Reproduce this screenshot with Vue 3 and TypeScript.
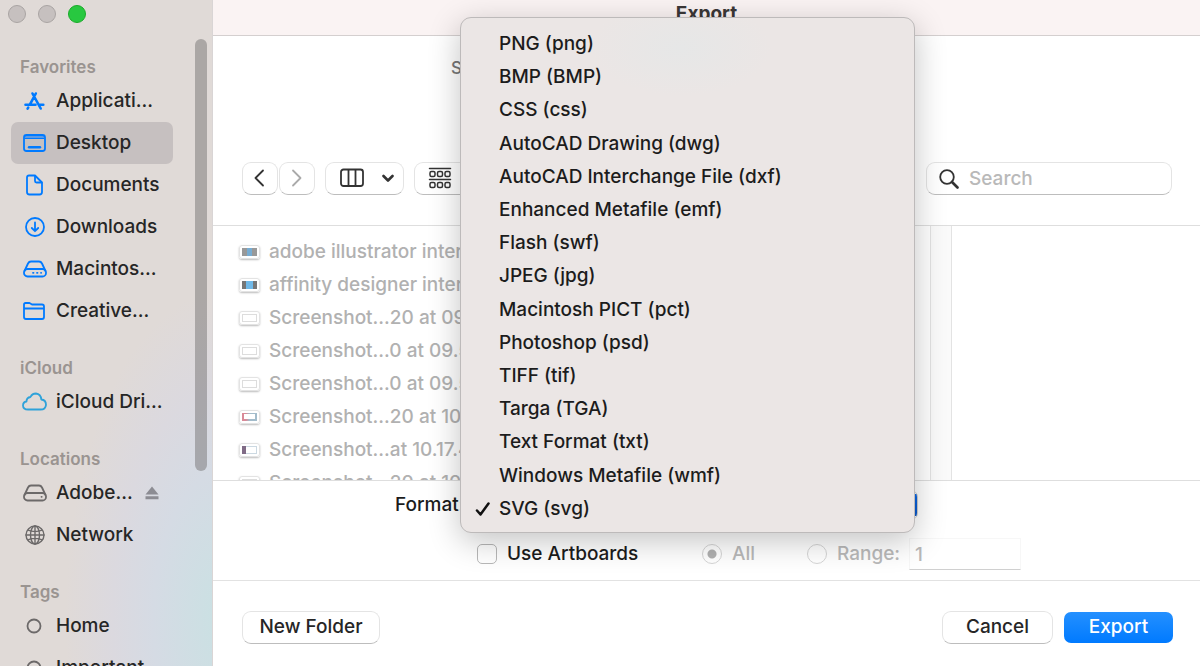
<script setup lang="ts">
import { ref } from 'vue'

interface Place { icon: string; label: string; selected?: boolean; eject?: boolean }
interface Section { title: string; places: Place[] }

const sections: Section[] = [
  {
    title: 'Favorites',
    places: [
      { icon: 'apps', label: 'Applicati...' },
      { icon: 'desktop', label: 'Desktop', selected: true },
      { icon: 'doc', label: 'Documents' },
      { icon: 'down', label: 'Downloads' },
      { icon: 'disk', label: 'Macintos...' },
      { icon: 'folder', label: 'Creative...' },
    ],
  },
  { title: 'iCloud', places: [{ icon: 'cloud', label: 'iCloud Dri...' }] },
  {
    title: 'Locations',
    places: [
      { icon: 'drive', label: 'Adobe...', eject: true },
      { icon: 'globe', label: 'Network' },
    ],
  },
  {
    title: 'Tags',
    places: [
      { icon: 'tag', label: 'Home' },
      { icon: 'tag', label: 'Important' },
    ],
  },
]

const files = [
  { thumb: 'dark', name: 'adobe illustrator interface' },
  { thumb: 'darker', name: 'affinity designer interface' },
  { thumb: 'plain', name: 'Screenshot...20 at 09.51' },
  { thumb: 'plain', name: 'Screenshot...0 at 09.52' },
  { thumb: 'plain', name: 'Screenshot...0 at 09.53' },
  { thumb: 'color', name: 'Screenshot...20 at 10.16' },
  { thumb: 'side', name: 'Screenshot...at 10.17.41' },
  { thumb: 'plain', name: 'Screenshot...20 at 10.18' },
]

const formats = [
  'PNG (png)', 'BMP (BMP)', 'CSS (css)', 'AutoCAD Drawing (dwg)',
  'AutoCAD Interchange File (dxf)', 'Enhanced Metafile (emf)', 'Flash (swf)',
  'JPEG (jpg)', 'Macintosh PICT (pct)', 'Photoshop (psd)', 'TIFF (tif)',
  'Targa (TGA)', 'Text Format (txt)', 'Windows Metafile (wmf)', 'SVG (svg)',
]
const format = ref('SVG (svg)')
const fileName = ref('')
const query = ref('')
const useArtboards = ref(false)
const scope = ref('all')
const range = ref('1')
</script>

<template>
  <div class="window">
    <aside class="sidebar">
      <div class="lights">
        <button class="light" aria-label="Close"></button>
        <button class="light" aria-label="Minimize"></button>
        <button class="light green" aria-label="Zoom"></button>
      </div>
      <nav>
        <section v-for="s in sections" :key="s.title" class="group">
          <h2>{{ s.title }}</h2>
          <a v-for="p in s.places" :key="p.label" href="#" class="place" :class="{ selected: p.selected }">
            <svg class="icon" :class="p.icon" viewBox="0 0 26 26" width="26" height="26" fill="none" stroke="currentColor" stroke-width="1.8" stroke-linecap="round" stroke-linejoin="round" aria-hidden="true">
              <g v-if="p.icon === 'apps'" stroke-width="2.6">
                <path d="M10.5 5.5 18.7 20.5M13.8 5.5 8 16.3M3.5 16.8H13.5M18 16.8H21.3M6.2 19.6 5.6 20.6" />
              </g>
              <g v-else-if="p.icon === 'desktop'">
                <path d="M3 7V6.2Q3 5 4.5 5H20.500Q22 5 22 6.200V8.500H3z" fill="#5b9ae6" stroke="none" />
                <rect x="2" y="5" width="21" height="16" rx="2.500" />
                <path d="M3 8.500H22" stroke-width="1" />
                <path d="M7 17.300H18" stroke-width="2.400" />
              </g>
              <g v-else-if="p.icon === 'doc'">
                <path d="M7 3.500H13L20 10.500V20Q20 22.500 17.500 22.500H7.500Q5 22.500 5 20V5.500Q5 3.500 7 3.500Z" />
                <path d="M13 4V9Q13 10.500 14.500 10.500H19.500" />
              </g>
              <g v-else-if="p.icon === 'down'">
                <circle cx="13" cy="13" r="9" />
                <path d="M13 8.500V17M9.800 14 13 17.200 16.200 14" />
              </g>
              <g v-else-if="p.icon === 'disk' || p.icon === 'drive'">
                <path d="M2.500 15 6 7.500Q7 5.500 9 5.500H17Q19 5.500 20 7.500L23.500 15" />
                <rect x="2" y="13" width="22" height="7.500" rx="3.500" />
                <path v-if="p.icon === 'disk'" d="M11 16.800h.5M15 16.800h.5M19 16.800h.2" />
                <path v-else d="M19.500 16.800h.2" />
              </g>
              <g v-else-if="p.icon === 'folder'">
                <path d="M2 10.500V6.500Q2 5 3.500 5H7.500L10 6.500H20Q22 6.500 22 8.500V19Q22 21 20 21H4Q2 21 2 19V10.500H22" />
              </g>
              <g v-else-if="p.icon === 'cloud'">
                <path d="M6 20.500Q1 20.500 1 16.500Q1 13 4.500 12.500Q4.500 8.500 8.500 8Q10 4.500 14 4.500Q18.800 5 19.300 10.500Q24 11 24 15.800Q23.500 20.500 18.500 20.500Z" />
              </g>
              <g v-else-if="p.icon === 'globe'" stroke-width="1.400">
                <circle cx="13" cy="13" r="9" />
                <ellipse cx="13" cy="13" rx="4.500" ry="9" />
                <path d="M13 4V22M4 13H22M6 8.200Q13 11 20 8.200M6 17.800Q13 15 20 17.800" />
              </g>
              <circle v-else cx="12" cy="13" r="6.500" stroke-width="1.800" />
            </svg>
            <span>{{ p.label }}</span>
            <svg v-if="p.eject" class="eject" viewBox="0 0 14 14" width="14" height="14" fill="currentColor" aria-hidden="true">
              <path d="M7 .5 13.500 8.500H.5ZM.5 10.200H13.500V13.200H.5Z" />
            </svg>
          </a>
        </section>
      </nav>
      <div class="scrollbar"></div>
    </aside>

    <main class="panel">
      <header class="titlebar"><h1>Export</h1></header>

      <div class="save-row">
        <label for="file-name">Save As:</label>
        <input id="file-name" v-model="fileName" type="text" />
      </div>

      <div class="toolbar">
        <div class="pair">
          <button class="tool" aria-label="Back">
            <svg viewBox="0 0 16 20" width="16" height="20"><path d="M11 2.500 3.500 10 11 17.500" /></svg>
          </button>
          <button class="tool forward" aria-label="Forward">
            <svg viewBox="0 0 16 20" width="16" height="20"><path d="M4 2.500 11.500 10 4 17.500" /></svg>
          </button>
        </div>
        <button class="tool view" aria-label="Column view">
          <svg viewBox="0 0 24 20" width="24" height="20"><rect x="1" y="1.500" width="22" height="16.500" rx="2.500" /><path d="M8.500 2V18M15.500 2V18" /></svg>
          <svg viewBox="0 0 12 10" width="12" height="10"><path class="bold" d="M1.500 3 6 7.500 10.500 3" /></svg>
        </button>
        <button class="tool arrange" aria-label="Group items">
          <svg viewBox="0 0 24 22" width="24" height="22">
            <path d="M1.500 1.500H22.500M1.500 12.500H22.500" />
            <rect x="2" y="4.500" width="5" height="5" rx="1.500" /><rect x="9.500" y="4.500" width="5" height="5" rx="1.500" /><rect x="17" y="4.500" width="5" height="5" rx="1.500" />
            <rect x="2" y="15.500" width="5" height="5" rx="1.500" /><rect x="9.500" y="15.500" width="5" height="5" rx="1.500" /><rect x="17" y="15.500" width="5" height="5" rx="1.500" />
          </svg>
        </button>
        <label class="search">
          <svg viewBox="0 0 20 20" width="20" height="20"><circle cx="8" cy="8" r="6.800" /><path class="bold" d="M13 13 18.500 18.500" /></svg>
          <input v-model="query" type="text" placeholder="Search" aria-label="Search" />
        </label>
      </div>

      <div class="browser">
        <ul class="files">
          <li v-for="f in files" :key="f.name">
            <span class="thumb" :class="f.thumb"></span>{{ f.name }}
          </li>
        </ul>
        <div class="divider"></div>
        <div class="column"></div>
      </div>

      <div class="options">
        <div class="format-row">
          <label for="format">Format:</label>
          <div class="format-field">
            <select id="format" v-model="format">
              <option v-for="f in formats" :key="f">{{ f }}</option>
            </select>
            <div class="menu" role="menu">
              <button v-for="f in formats" :key="f" role="menuitemradio" :aria-checked="f === format" @click="format = f">
                <span class="tick">
                  <svg v-if="f === format" viewBox="0 0 16 16" width="16" height="16" fill="none" stroke="#111" stroke-width="2.500" stroke-linecap="round" stroke-linejoin="round" aria-hidden="true"><path d="M2 9.500 5.500 13.500 13.500 2.500" /></svg>
                </span>{{ f }}
              </button>
            </div>
          </div>
        </div>
        <div class="artboards">
          <label><input v-model="useArtboards" type="checkbox" />Use Artboards</label>
          <label class="off"><input v-model="scope" type="radio" value="all" disabled />All</label>
          <label class="off"><input v-model="scope" type="radio" value="range" disabled />Range:</label>
          <input v-model="range" class="range" type="text" aria-label="Artboard range" disabled />
        </div>
      </div>

      <footer class="footer">
        <button class="push folder-btn">New Folder</button>
        <button class="push cancel">Cancel</button>
        <button class="push primary">Export</button>
      </footer>
    </main>
  </div>
</template>

<style>
body { margin: 0; }
</style>

<style scoped>
* { box-sizing: border-box; }
.window {
  display: flex;
  height: 100vh;
  overflow: hidden;
  background: #fff;
  color: #262626;
  font: 450 19px/24px Inter, "Liberation Sans", sans-serif;
}
button, input, select { font: inherit; color: inherit; margin: 0; }
button { padding: 0; border: 0; background: none; }

.sidebar {
  position: relative;
  flex: none;
  width: 213px;
  overflow: hidden;
  border-right: 1px solid #d9d5d5;
  background: radial-gradient(ellipse 160px 330px at 225px 620px, #cbe0e3 8%, #d5dbe4 45%, #dbd9df 70%, #e0dad7 100%) #e0dad7;
}
.lights { display: flex; gap: 12px; height: 54px; padding: 5px 8px; }
.light { width: 18px; height: 18px; border: 1px solid #a9a4a3; border-radius: 50%; background: #c6c0bf; }
.green { border-color: #1aab29; background: #28c840; }
.group { margin-bottom: 23px; }
h2 { margin: 0; padding-left: 20px; color: #9a9491; font-size: 17px; line-height: 26px; font-weight: 600; }
.place {
  display: flex;
  align-items: center;
  height: 42px;
  margin: 0 39px 0 11px;
  padding-left: 11px;
  border-radius: 7px;
  color: inherit;
  text-decoration: none;
  white-space: nowrap;
}
.place span { margin-left: 8px; }
.selected { background: #c6c0c0; }
.icon { flex: none; color: #007aff; }
.icon.cloud { color: #2fa2d9; }
.icon.drive, .icon.globe, .icon.tag { color: #6c6969; }
.eject { margin-left: 12px; color: #8c8c93; }
.scrollbar { position: absolute; top: 39px; right: 5px; width: 12px; height: 432px; border-radius: 6px; background: rgba(110, 106, 106, 0.46); }

.panel { display: flex; flex: 1; flex-direction: column; min-width: 0; }
.titlebar { height: 36px; border-bottom: 1px solid #d4cfcf; background: #faf3f3; text-align: center; }
h1 { margin: 0; font-size: 19px; line-height: 28px; font-weight: 700; color: #3a3737; }
.save-row { display: flex; align-items: center; gap: 10px; height: 64px; padding-left: 238px; color: #777; font-size: 17px; }
.save-row input { width: 300px; height: 30px; border: 1px solid #ddd; }

.toolbar { display: flex; align-items: flex-start; gap: 10px; height: 126px; padding: 62px 28px 0 29px; border-bottom: 1px solid #dedede; }
.pair { display: flex; gap: 1px; }
.tool, .search, .push {
  height: 33px;
  border: 1px solid #e4e4e4;
  border-bottom-color: #bdbdbd;
  border-radius: 9px;
  background: #fff;
}
.tool { display: flex; align-items: center; justify-content: center; width: 36px; padding-bottom: 2px; }
.tool svg, .search svg { fill: none; stroke: #333; stroke-width: 1.8; stroke-linecap: round; stroke-linejoin: round; }
.bold { stroke-width: 2.6; }
.forward svg { stroke: #aaa; }
.view { width: 79px; gap: 18px; padding-left: 5px; }
.arrange { width: 90px; justify-content: flex-start; padding-left: 13px; }
.arrange svg { stroke-width: 1.5; }
.search { display: flex; align-items: center; gap: 10px; width: 246px; margin-left: auto; padding: 0 12px; }
.search svg { flex: none; }
.search input { width: 100%; min-width: 0; padding: 0; border: 0; outline: 0; background: none; }
.search input::placeholder { color: #b9b9b9; opacity: 1; }

.browser { display: flex; flex: 1; min-height: 0; overflow: hidden; border-bottom: 1px solid #dedede; }
.files { flex: none; width: 717px; margin: 0; padding: 9px 26px; list-style: none; color: #b1b1b1; }
.files li { display: flex; align-items: center; gap: 9px; height: 33px; white-space: nowrap; }
.thumb { width: 21px; height: 14px; border: 3px solid #fff; border-radius: 3px; outline: 1px solid #e3e3e3; outline-offset: -1px; box-shadow: 0 1px 2px #bbb; background: #fff; }
.dark { background: linear-gradient(90deg, #999 30%, #77acd2 30% 65%, #999 65%); }
.darker { background: linear-gradient(90deg, #777 25%, #71b9e8 25% 70%, #777 70%); }
.plain { background: linear-gradient(#fff, #fff) center / 13px 6px no-repeat #ddd; }
.color { background: linear-gradient(#fff, #fff) center / 11px 5px no-repeat, linear-gradient(90deg, #d98a98 25%, #a3bccb 50%); }
.side { background: linear-gradient(#fff, #fff) 4px 1px / 10px 6px no-repeat, linear-gradient(90deg, #806b86 28%, #ccd9e2 28%); }
.divider { width: 22px; border: solid #e3e3e3; border-width: 0 1px; background: #fafafa; }
.column { flex: 1; }

.options { height: 100px; border-bottom: 1px solid #e2e2e2; color: #1c1c1c; }
.format-row { display: flex; align-items: center; height: 47px; padding-left: 182px; }
.format-row label { width: 82px; flex: none; }
.format-field { position: relative; width: 441px; }
select {
  display: block;
  width: 100%;
  height: 30px;
  padding: 0 12px;
  border: 1px solid #d0d0d0;
  border-radius: 7px;
  appearance: none;
  background: linear-gradient(#0a67e8, #0a57c8) right center / 24px 22px no-repeat #fff;
}
.menu {
  position: absolute;
  right: 3px;
  bottom: -13px;
  display: flex;
  flex-direction: column;
  justify-content: space-between;
  width: 455px;
  height: 516px;
  padding: 10px 0 6px;
  border: 1px solid #bdbaba;
  border-radius: 11px;
  background: radial-gradient(ellipse 90px 48px at 220px 30px, #e6e7e7, #ebe6e5) #ebe6e5;
  box-shadow: 0 8px 32px rgba(0, 0, 0, 0.24);
  font-weight: 500;
}
.menu button { display: flex; align-items: center; height: 33px; padding-left: 14px; color: #1c1c1c; text-align: left; white-space: nowrap; }
.tick { display: flex; width: 24px; }
.artboards { display: grid; grid-template-columns: 225px 105px 102px 112px; align-items: center; height: 51px; padding-left: 264px; }
.artboards label { display: flex; align-items: center; gap: 10px; white-space: nowrap; }
.artboards .off { color: #b9b9b9; }
.artboards label input { flex: none; width: 20px; height: 20px; border: 1px solid #b8b8b8; border-radius: 5px; appearance: none; background: #fff; }
.artboards .off input { border-color: #d6d6d6; border-radius: 50%; }
.artboards .off input:checked { background: radial-gradient(circle, #b0b0b0 4px, #fff 5px); }
.range { width: 100%; height: 32px; padding: 2px 5px 0; border: 1px solid #f7f7f7; border-bottom-color: #d0d0d0; border-radius: 0; background: #fff; color: #b9b9b9; }

.footer { display: flex; align-items: flex-start; gap: 11px; height: 85px; padding: 30px 27px 0 29px; }
.push { padding-bottom: 2px; color: #262626; }
.folder-btn { width: 138px; margin-right: auto; }
.cancel { width: 111px; }
.primary { width: 109px; height: 31px; margin-top: 1px; border: 0; border-radius: 7px; background: linear-gradient(#2490ff, #007aff); color: #fff; font-weight: 500; }
</style>
